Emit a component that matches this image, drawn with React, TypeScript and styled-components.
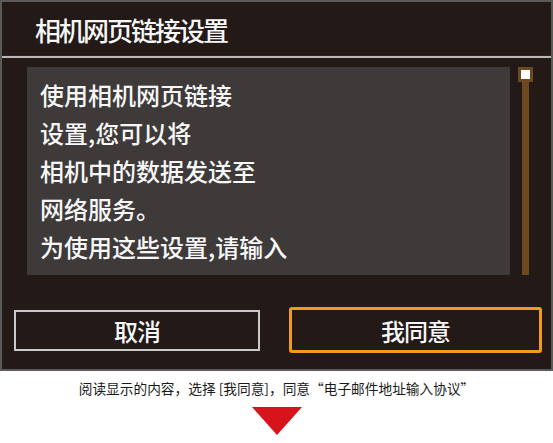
import React from "react";
import styled, { createGlobalStyle } from "styled-components";

const Global = createGlobalStyle`
  html, body { margin: 0; padding: 0; background: #ffffff; }
  * { box-sizing: border-box; }
  body { font-family: "Noto Sans CJK SC", "Noto Sans", sans-serif; }
`;

const Page = styled.div`
  width: 553px;
  display: flex;
  flex-direction: column;
  align-items: center;
`;

const Screen = styled.div`
  width: 553px;
  height: 371px;
  background: #231a18;
  border: 2px solid #5a5a5a;
  display: flex;
  flex-direction: column;
  color: #f7f7f7;
  font-weight: 500;
`;

const Header = styled.div`
  height: 54px;
  display: flex;
  align-items: center;
  padding-left: 33px;
  padding-top: 2px;
  font-size: 26px;
  letter-spacing: -2px;
  border-bottom: 1px solid #3a1d1a;
`;

const Separator = styled.div`
  height: 2px;
  background: #b9b9b9;
`;

const Main = styled.div`
  display: flex;
  padding-top: 9px;
  padding-left: 25px;
  gap: 8px;
`;

const ContentBox = styled.div`
  width: 483px;
  height: 208px;
  background: #3e3a3a;
  padding: 9px 0 0 13px;
  font-size: 24px;
  line-height: 38px;
  overflow: hidden;
`;

const Line = styled.div`
  white-space: nowrap;
`;

const Scrollbar = styled.div`
  width: 15px;
  height: 208px;
  display: flex;
  flex-direction: column;
  align-items: center;
`;

const Thumb = styled.div`
  width: 15px;
  height: 15px;
  border: 3px solid #6e4820;
  background: #ffffff;
  flex-shrink: 0;
`;

const Track = styled.div`
  width: 7px;
  flex: 1;
  background: #6e4820;
`;

const ButtonRow = styled.div`
  display: flex;
  align-items: center;
  margin-top: 32px;
  padding-left: 12px;
  gap: 29px;
`;

const Button = styled.div<{ $focused?: boolean; $w: number }>`
  width: ${(p) => p.$w}px;
  height: ${(p) => (p.$focused ? 46 : 41)}px;
  border: ${(p) => (p.$focused ? "3px solid #f39a1e" : "2px solid #c9c9c9")};
  border-radius: ${(p) => (p.$focused ? 3 : 0)}px;
  display: flex;
  align-items: center;
  justify-content: center;
  font-size: 24px;
  letter-spacing: -1px;
  color: #f7f7f7;
`;

const Caption = styled.div`
  margin-top: 4px;
  font-size: 13.7px;
  line-height: 26px;
  color: #1a1a1a;
  font-family: "Noto Sans CJK SC", sans-serif;
`;

const Arrow = styled.svg`
  margin-top: 6px;
  display: block;
`;

export default function App() {
  return (
    <>
      <Global />
      <Page>
        <Screen>
          <Header>相机网页链接设置</Header>
          <Separator />
          <Main>
            <ContentBox>
              <Line>使用相机网页链接</Line>
              <Line>设置,您可以将</Line>
              <Line>相机中的数据发送至</Line>
              <Line>网络服务。</Line>
              <Line>为使用这些设置,请输入</Line>
            </ContentBox>
            <Scrollbar>
              <Thumb />
              <Track />
            </Scrollbar>
          </Main>
          <ButtonRow>
            <Button $w={246}>取消</Button>
            <Button $w={253} $focused>
              我同意
            </Button>
          </ButtonRow>
        </Screen>
        <Caption>阅读显示的内容，选择 [我同意]，同意“电子邮件地址输入协议”</Caption>
        <Arrow width="50" height="28" viewBox="0 0 50 28">
          <polygon points="0,0 50,0 25,28" fill="#d7141c" />
        </Arrow>
      </Page>
    </>
  );
}
